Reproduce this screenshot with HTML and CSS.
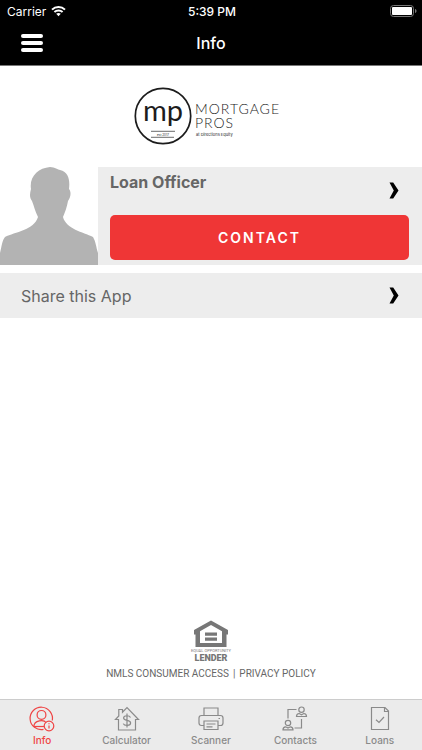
FILE: index.html
```html
<!DOCTYPE html>
<html lang="en">
<head>
    <meta charset="UTF-8">
    <meta name="viewport" content="width=device-width, initial-scale=1.0">
    <title>Info</title>
    <link rel="stylesheet" href="styles.css">
</head>
<body>
    <header class="header">
        <div class="status-bar">
            <div class="carrier">
                <span>Carrier</span>
                <svg width="15" height="12" viewBox="0 0 15 12" fill="none" stroke="#fff" stroke-width="2">
                    <path d="M1 4.6C4.6 1 10.4 1 14 4.6"/>
                    <path d="M3.4 7C5.7 4.9 9.3 4.9 11.6 7"/>
                    <path d="M5.2 8.8C6.5 7.7 8.5 7.7 9.8 8.8L7.5 11.2Z" fill="#fff" stroke="none"/>
                </svg>
            </div>
            <span class="clock">5:39 PM</span>
            <svg class="battery" width="27" height="12" viewBox="0 0 27 12">
                <rect x="0.5" y="0.5" width="23" height="11" rx="3" fill="none" stroke="#777"/>
                <rect x="2" y="2" width="20" height="8" rx="1" fill="#fff"/>
                <path d="M25 4c2 .6 2 3.4 0 4z" fill="#777"/>
            </svg>
        </div>
        <div class="nav-bar">
            <button class="menu-button" aria-label="Menu">
                <span></span>
                <span></span>
                <span></span>
            </button>
            <h1>Info</h1>
        </div>
    </header>

    <main class="content">
        <!-- Company logo -->
        <div class="brand">
            <svg width="154" height="60" viewBox="0 0 154 60" fill="#1c1c1c">
                <circle cx="29" cy="30" r="27.7" fill="#fff" stroke="#1c1c1c" stroke-width="1.7"/>
                <text class="brand-initials" x="29" y="35" text-anchor="middle">mp</text>
                <path d="M17 45.3H41M17 51.3H40" stroke="#444" stroke-width="0.8"/>
                <text class="brand-year" x="29" y="49.5" text-anchor="middle">est 2017</text>
                <text class="brand-name" x="61" y="28">MORTGAGE</text>
                <text class="brand-name" x="61" y="42">PROS</text>
                <text class="brand-tagline" x="62" y="50">at Directions Equity</text>
            </svg>
        </div>

        <!-- Loan officer -->
        <section class="officer">
            <svg class="avatar" width="98" height="98" viewBox="0 0 98 98">
                <path d="M0 98V86C2 78 2 74 5 70C15 65 34 63 38 50C35 44 34 39 32 34C29 30 30 26 31 22C29 10 38 1 50 0C55 0 58 3 60 3C69 5 70 14 69 22C72 26 70 31 68 34C67 40 65 45 63 50C66 62 83 65 93 70C96 75 96 80 98 86V98Z" fill="#b3b3b3"/>
            </svg>
            <div class="officer-info">
                <a class="officer-link" href="#officer">
                    <h2>Loan Officer</h2>
                    <svg class="chevron" width="10" height="17" viewBox="0 0 10 17"><path d="M0.5 0.5H4.2L9.5 8.5L4.2 16.5H0.5L4.8 8.5Z"/></svg>
                </a>
                <button class="contact-button">CONTACT</button>
            </div>
        </section>

        <a class="share" href="#share">
            <span>Share this App</span>
            <svg class="chevron" width="10" height="17" viewBox="0 0 10 17"><path d="M0.5 0.5H4.2L9.5 8.5L4.2 16.5H0.5L4.8 8.5Z"/></svg>
        </a>
    </main>

    <footer class="legal">
        <svg width="44" height="42" viewBox="0 0 44 42" fill="#777">
            <path fill-rule="evenodd" d="M22 0.5L39 10V14.5H37.5V27H6.5V14.5H5V10ZM22 5L11 11.2V23H33V11.2Z"/>
            <path d="M16 12.5h12v3.2H16zM16 17.5h12v3.2H16z"/>
            <text class="lender-small" x="22" y="32" text-anchor="middle">EQUAL OPPORTUNITY</text>
            <text class="lender" x="22" y="41" text-anchor="middle">LENDER</text>
        </svg>
        <div class="legal-links">
            <a href="#nmls">NMLS CONSUMER ACCESS</a>
            <span>|</span>
            <a href="#privacy">PRIVACY POLICY</a>
        </div>
    </footer>

    <nav class="tab-bar">
        <a class="tab active" href="#info">
            <svg width="26" height="26" viewBox="0 0 26 26">
                <path d="M14.5 23.4A11.2 11.2 0 1 1 23.3 14.5"/>
                <circle cx="12.5" cy="8.9" r="4.4"/>
                <path d="M4.8 20.5C5.2 13.8 15 13.5 17 16.5"/>
                <path d="M4.8 20.5H15"/>
                <circle cx="20" cy="20" r="4.8"/>
                <path d="M20 19.4V22.5M20 17.2V18.3"/>
            </svg>
            <span>Info</span>
        </a>
        <a class="tab" href="#calculator">
            <svg width="26" height="26" viewBox="0 0 26 26">
                <path d="M4.5 13.5V24H21.5V13.5H24.5L13 1.5L8.5 6.2V3.5H4.8V10L1.5 13.5Z"/>
                <path d="M16.5 11.5C15.5 9.2 9.6 9 9.6 12C9.6 15.4 16.6 13.4 16.6 17C16.6 20.2 10.2 20 9.3 17.6M13 7.5V21.5"/>
            </svg>
            <span>Calculator</span>
        </a>
        <a class="tab" href="#scanner">
            <svg width="26" height="26" viewBox="0 0 26 26">
                <path d="M6 9.5V2H20V9.5M6 19.5H3.5Q1 19.5 1 17V12Q1 9.5 3.5 9.5H22.5Q25 9.5 25 12V17Q25 19.5 22.5 19.5H20"/>
                <path d="M6 15H20V23.5H6ZM8.5 18H17.5M8.5 20.8H14.5M20.5 12.5H22"/>
            </svg>
            <span>Scanner</span>
        </a>
        <a class="tab" href="#contacts">
            <svg width="26" height="26" viewBox="0 0 26 26">
                <circle cx="19.5" cy="3.7" r="2.7"/>
                <path d="M14.5 10.5Q14.5 7.7 17.2 7.5L19.5 8.7L21.8 7.5Q24.5 7.7 24.5 10.5Z"/>
                <circle cx="6" cy="17" r="2.7"/>
                <path d="M1 23.8Q1 21 3.7 20.8L6 22L8.3 20.8Q11 21 11 23.8Z"/>
                <path d="M6 12.5V3.5H14.5M19.5 13V22H12.5"/>
            </svg>
            <span>Contacts</span>
        </a>
        <a class="tab" href="#loans">
            <svg width="26" height="26" viewBox="0 0 26 26">
                <path d="M4.5 1.5H18L21.5 5V23.5H4.5ZM17.5 1.5V5.5H21.5"/>
                <path d="M9 13.8L12 16.5L17 11"/>
            </svg>
            <span>Loans</span>
        </a>
    </nav>
</body>
</html>
```
FILE: styles.css
```css
* {
    box-sizing: border-box;
}
body {
    margin: 0;
    min-height: 100vh;
    display: flex;
    flex-direction: column;
    font-family: Inter, "Liberation Sans", sans-serif;
    background-color: #fff;
    color: #666;
}
a {
    color: inherit;
    text-decoration: none;
}
svg {
    display: block;
}

/* Header */
.header {
    background-color: #000;
    color: #fff;
    border-bottom: 1px solid #777;
}
.status-bar {
    display: grid;
    grid-template-columns: 1fr auto 1fr;
    align-items: center;
    height: 22px;
    padding: 0 5px 0 7px;
    font-size: 12px;
}
.carrier {
    display: flex;
    align-items: center;
    gap: 5px;
}
.clock {
    font-weight: 500;
}
.battery {
    justify-self: end;
}
.nav-bar {
    display: grid;
    grid-template-columns: 1fr auto 1fr;
    align-items: center;
    height: 43px;
    padding: 0 21px 2px;
}
.nav-bar h1 {
    margin: 0;
    font-size: 16px;
    font-weight: 500;
}
.menu-button {
    display: flex;
    flex-direction: column;
    gap: 3px;
    width: 22px;
    padding: 0;
    border: none;
    background: none;
    cursor: pointer;
}
.menu-button span {
    height: 4px;
    border-radius: 2px;
    background-color: #fff;
}

/* Logo */
.brand {
    display: flex;
    justify-content: center;
    padding: 20px 0 21px;
}
.brand-initials {
    font-family: Lato, sans-serif;
    font-size: 29px;
}
.brand-year {
    font-size: 3px;
}
.brand-name {
    font-family: Lato, sans-serif;
    font-size: 14px;
    font-weight: 300;
    letter-spacing: 1px;
}
.brand-tagline {
    font-size: 4px;
}

/* Rows */
.officer {
    display: flex;
    background-color: #ededed;
}
.avatar {
    flex: none;
    background-color: #fff;
}
.officer-info {
    flex: 1;
    display: flex;
    flex-direction: column;
    justify-content: space-between;
    padding: 5px 13px 5px 12px;
}
.officer-link {
    display: flex;
    justify-content: space-between;
    align-items: flex-start;
    padding-right: 10px;
}
.officer-link h2 {
    margin: 0;
    font-size: 16px;
    line-height: 20px;
    font-weight: 700;
}
.officer-link .chevron {
    margin-top: 10px;
}
.contact-button {
    height: 45px;
    border: none;
    border-radius: 5px;
    background-color: #ef3636;
    color: #fff;
    font-family: inherit;
    font-size: 14px;
    font-weight: 600;
    letter-spacing: 2px;
    cursor: pointer;
}
.share {
    display: flex;
    justify-content: space-between;
    align-items: center;
    height: 45px;
    margin-top: 8px;
    padding: 0 23px 0 21px;
    background-color: #ededed;
    font-size: 16px;
}
.chevron {
    fill: #000;
}

/* Footer */
.legal {
    display: flex;
    flex-direction: column;
    align-items: center;
    gap: 5px;
    margin-top: auto;
    padding-bottom: 18px;
}
.lender {
    font-family: Roboto, sans-serif;
    font-size: 9px;
    font-weight: 900;
}
.lender-small {
    font-family: Roboto, sans-serif;
    font-size: 4px;
}
.legal-links {
    display: flex;
    gap: 4px;
    font-family: Roboto, sans-serif;
    font-size: 10px;
    line-height: 14px;
}

/* Tabs */
.tab-bar {
    display: grid;
    grid-template-columns: repeat(5, 1fr);
    height: 51px;
    border-top: 1px solid #ccc;
    background-color: #ebebeb;
}
.tab {
    display: flex;
    flex-direction: column;
    align-items: center;
    padding-top: 6px;
    color: #8a8a8a;
    font-size: 10px;
    line-height: 16px;
    font-weight: 500;
}
.tab svg {
    fill: none;
    stroke: currentColor;
    stroke-width: 1.2;
}
.tab.active {
    color: #ef4444;
}
```
